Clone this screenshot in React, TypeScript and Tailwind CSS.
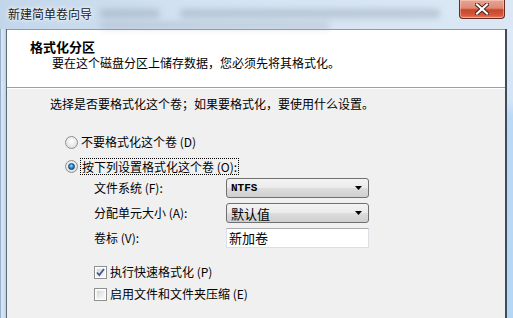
import React from "react";

const font = { fontFamily: '"Noto Sans CJK SC", "Noto Sans", sans-serif' };

function Radio({ checked }: { checked?: boolean }) {
  return (
    <span className="relative inline-flex h-[13px] w-[13px] shrink-0 items-center justify-center rounded-full border border-[#8e8f8f] bg-[radial-gradient(circle_at_50%_40%,#ffffff_0%,#e6e6e6_60%,#d0d0d0_100%)]">
      {checked && (
        <span className="h-[7px] w-[7px] rounded-full border border-[#0e3e6e] bg-[radial-gradient(circle_at_45%_35%,#9fe2ff_0%,#2b8fd6_45%,#0a4d92_100%)]" />
      )}
    </span>
  );
}

function Checkbox({ checked }: { checked?: boolean }) {
  return (
    <span className="relative inline-flex h-[13px] w-[13px] shrink-0 items-center justify-center border border-[#8e8f8f] bg-white">
      <span className="absolute inset-[1px] border border-[#f4f4f4] bg-[linear-gradient(135deg,#d5d5d5_0%,#e8e8e8_50%,#f8f8f8_100%)]" />
      {checked && (
        <svg className="relative" width="11" height="11" viewBox="0 0 11 11">
          <path d="M2 5.5 L4.3 8 L9 2" fill="none" stroke="#3c5a9a" strokeWidth="1.8" />
        </svg>
      )}
    </span>
  );
}

function Select({ value, mono }: { value: string; mono?: boolean }) {
  return (
    <div className="flex h-[20px] w-[143px] items-center justify-between rounded-[3px] border border-[#707070] bg-[linear-gradient(#f3f3f3_0%,#ebebeb_48%,#dddddd_52%,#cfcfcf_100%)] pl-[4px] pr-[5px]">
      {mono ? (
        <span className="font-['Liberation_Mono',monospace] text-[11px] font-bold leading-none text-black">{value}</span>
      ) : (
        <span className="text-[13px] leading-none text-black">{value}</span>
      )}
      <svg width="8" height="5" viewBox="0 0 8 5">
        <path d="M0 0 H7 L3.5 4 Z" fill="#000" />
      </svg>
    </div>
  );
}

export default function App() {
  return (
    <div
      className="relative h-[318px] w-[513px] overflow-hidden bg-[linear-gradient(90deg,#c2d6ea_0%,#d4e3f2_40%,#dbe7f4_100%)] text-[12px] text-black"
      style={font}
    >
      {/* blurred aero background */}
      <div className="pointer-events-none absolute left-[100px] top-[9px] h-[9px] w-[60px] rounded bg-[#8a98a8] opacity-40 blur-[3px]" />
      <div className="pointer-events-none absolute left-[180px] top-[9px] h-[9px] w-[260px] rounded bg-[#7e8ea0] opacity-35 blur-[3px]" />
      <div className="pointer-events-none absolute left-[100px] top-[22px] h-[7px] w-[230px] rounded bg-[#8a98a8] opacity-30 blur-[3px]" />

      {/* title bar */}
      <div className="relative flex h-[29px] items-start justify-between">
        <div className="pl-[8px] pt-[6px] text-[12px] leading-[16px] text-[#1a1a1a] [text-shadow:0_0_6px_#ffffff,0_0_3px_#ffffff]">
          新建简单卷向导
        </div>
        <div className="mr-[8px] flex h-[19px] w-[46px] items-center justify-center rounded-b-[4px] border border-t-0 border-[#6b2a20] bg-[linear-gradient(#e9a594_0%,#dc8a75_45%,#c8452c_55%,#d7583c_85%,#e4876d_100%)] shadow-[inset_0_0_0_1px_rgba(255,220,210,0.45)]">
          <svg width="14" height="12" viewBox="0 0 14 12">
            <path d="M2 1.5 L12 10.5 M12 1.5 L2 10.5" stroke="#4a1a12" strokeWidth="4" strokeLinecap="square" />
            <path d="M2 1.5 L12 10.5 M12 1.5 L2 10.5" stroke="#ffffff" strokeWidth="2.2" strokeLinecap="square" />
          </svg>
        </div>
      </div>

      <div className="flex h-[289px]">
        {/* left frame */}
        <div className="w-[7px] shrink-0 border-r border-[#5d6b7a] bg-[linear-gradient(90deg,#6a86a6_0%,#dbe8f5_20%,#c9dcef_80%,#b4c8dd_100%)]" />

        {/* client */}
        <div className="flex w-[498px] shrink-0 flex-col border-t border-[#8f9aa6] bg-[#f0f0f0]">
          {/* header */}
          <div className="h-[58px] border-b border-[#a0a0a0] bg-white pl-[23px] pt-[8px]">
            <div className="text-[13px] font-bold leading-[17px]">格式化分区</div>
            <div className="pl-[22px] text-[12px] leading-[15px]">要在这个磁盘分区上储存数据，您必须先将其格式化。</div>
          </div>
          <div className="h-px bg-white" />

          {/* body */}
          <div className="flex flex-col pl-[43px] pt-[5px]">
            <div className="flex h-[20px] items-center">选择是否要格式化这个卷；如果要格式化，要使用什么设置。</div>

            <div className="mt-[16px] flex h-[24px] items-center pl-[15px]">
              <Radio />
              <span className="ml-[3px]">不要格式化这个卷 (D)</span>
            </div>
            <div className="flex h-[24px] items-center pl-[15px]">
              <Radio checked />
              <span className="ml-[2px] border border-dotted border-black px-px leading-[15px]">按下列设置格式化这个卷 (O):</span>
            </div>

            <div className="flex flex-col gap-[5px] pl-[44px]">
              <div className="flex h-[20px] items-center">
                <span className="w-[132px]">文件系统 (F):</span>
                <Select value="NTFS" mono />
              </div>
              <div className="flex h-[20px] items-center">
                <span className="w-[132px]">分配单元大小 (A):</span>
                <Select value="默认值" />
              </div>
              <div className="flex h-[20px] items-center">
                <span className="w-[132px]">卷标 (V):</span>
                <div className="flex h-[20px] w-[143px] items-center border border-[#dbdfe6] border-t-[#abadb3] bg-white pl-[2px] text-[13px]">
                  新加卷
                </div>
              </div>

              <div className="mt-[8px] flex h-[22px] items-center">
                <Checkbox checked />
                <span className="ml-[3px]">执行快速格式化 (P)</span>
              </div>
              <div className="-mt-[5px] flex h-[22px] items-center">
                <Checkbox />
                <span className="ml-[3px]">启用文件和文件夹压缩 (E)</span>
              </div>
            </div>
          </div>
        </div>

        {/* right frame */}
        <div className="w-[8px] shrink-0 border-l-2 border-[#3e4c5c] bg-[linear-gradient(#dfeaf6_0%,#d3e4f5_25%,#bcd9f5_30%,#b6d6f6_100%)]" />
      </div>
    </div>
  );
}
